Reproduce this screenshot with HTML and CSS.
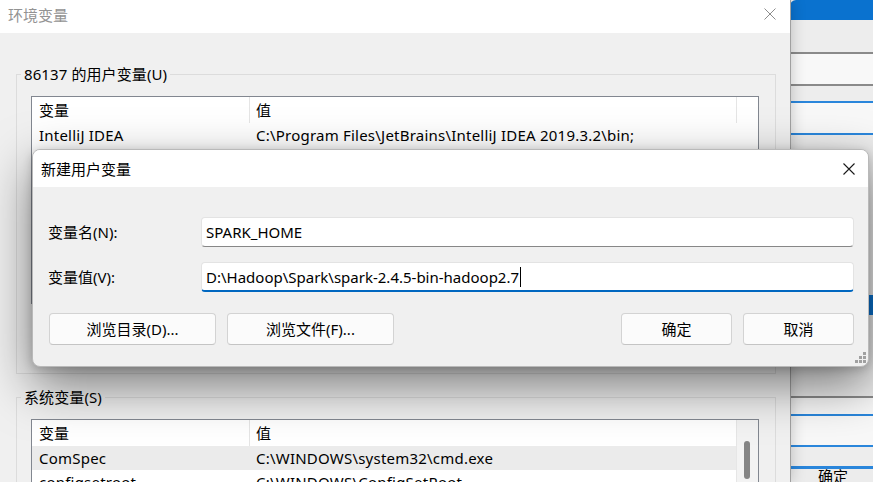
FILE: index.html
```html
<!DOCTYPE html>
<html lang="zh-CN">
<head>
<meta charset="utf-8">
<title>环境变量</title>
<link rel="stylesheet" href="styles.css">
</head>
<body>
<div class="desktop">

  <div class="sys-window">
    <div class="band band-blue"></div>
    <div class="band band-gray h32"></div>
    <div class="line-dark"></div>
    <div class="band band-light h31"></div>
    <div class="line-dark"></div>
    <div class="band band-gray h15"></div>
    <div class="line-blue"></div>
    <div class="band band-light h31"></div>
    <div class="line-blue"></div>
    <div class="band band-gray h160"></div>
    <div class="band band-blueblock"></div>
    <div class="band band-gray h80"></div>
    <div class="line-dark"></div>
    <div class="band band-light h16"></div>
    <div class="line-blue"></div>
    <div class="band band-light h30"></div>
    <div class="line-blue"></div>
    <div class="band band-gray h20"></div>
    <div class="line-blue thick"></div>
    <div class="sys-btn">确定</div>
  </div>

  <div class="main-window">
    <div class="titlebar">
      <span class="title inactive">环境变量</span>
      <svg class="close" width="12" height="12" viewBox="0 0 12 12"><path d="M0.5 0.5L11.5 11.5M11.5 0.5L0.5 11.5" stroke="#8c8c8c" stroke-width="1"/></svg>
    </div>
    <div class="main-body">
      <fieldset class="group group-user">
        <legend>86137 的用户变量(U)</legend>
        <div class="list list-user">
          <div class="list-main">
            <div class="list-head">
              <div class="hcell c1">变量</div>
              <div class="hcell c2">值</div>
              <div class="hcell c3"></div>
            </div>
            <div class="list-row">
              <div class="cell c1">IntelliJ IDEA</div>
              <div class="cell c2">C:\Program Files\JetBrains\IntelliJ IDEA 2019.3.2\bin;</div>
            </div>
          </div>
        </div>
      </fieldset>

      <fieldset class="group group-sys">
        <legend>系统变量(S)</legend>
        <div class="list list-sys">
          <div class="list-main">
            <div class="list-head">
              <div class="hcell c1">变量</div>
              <div class="hcell c2">值</div>
            </div>
            <div class="list-row selected">
              <div class="cell c1">ComSpec</div>
              <div class="cell c2">C:\WINDOWS\system32\cmd.exe</div>
            </div>
            <div class="list-row">
              <div class="cell c1">configsetroot</div>
              <div class="cell c2">C:\WINDOWS\ConfigSetRoot</div>
            </div>
          </div>
          <div class="scrollbar"><div class="thumb"></div></div>
        </div>
      </fieldset>
    </div>
  </div>

  <div class="dialog">
    <div class="dlg-titlebar">
      <span class="title">新建用户变量</span>
      <svg class="close" width="12" height="12" viewBox="0 0 12 12"><path d="M0.5 0.5L11.5 11.5M11.5 0.5L0.5 11.5" stroke="#1a1a1a" stroke-width="1.1"/></svg>
    </div>
    <div class="dlg-body">
      <div class="form-row">
        <label class="form-label">变量名(N):</label>
        <div class="input"><span>SPARK_HOME</span></div>
      </div>
      <div class="form-row">
        <label class="form-label">变量值(V):</label>
        <div class="input focused"><span>D:\Hadoop\Spark\spark-2.4.5-bin-hadoop2.7</span><span class="caret"></span></div>
      </div>
      <div class="dlg-buttons">
        <div class="btn-group">
          <button class="btn w167">浏览目录(D)...</button>
          <button class="btn w167">浏览文件(F)...</button>
        </div>
        <div class="btn-group">
          <button class="btn w111">确定</button>
          <button class="btn w111">取消</button>
        </div>
      </div>
    </div>
    <svg class="grip" width="11" height="11" viewBox="0 0 11 11">
      <rect x="8" y="0" width="3" height="3" fill="#a0a0a0"/>
      <rect x="4" y="4" width="3" height="3" fill="#a0a0a0"/>
      <rect x="8" y="4" width="3" height="3" fill="#a0a0a0"/>
      <rect x="0" y="8" width="3" height="3" fill="#a0a0a0"/>
      <rect x="4" y="8" width="3" height="3" fill="#a0a0a0"/>
      <rect x="8" y="8" width="3" height="3" fill="#a0a0a0"/>
    </svg>
  </div>

</div>
</body>
</html>
```

FILE: styles.css
```css
* { box-sizing: border-box; }

html, body {
  margin: 0;
  padding: 0;
  width: 873px;
  height: 482px;
  overflow: hidden;
  background: #f0f0f0;
}

body {
  font-family: "Noto Sans", "Noto Sans CJK SC", sans-serif;
  font-size: 15px;
  line-height: 20px;
  color: #000;
}

.desktop {
  position: relative;
  width: 873px;
  height: 482px;
  overflow: hidden;
}

/* ---------- background system window ---------- */
.sys-window {
  position: absolute;
  left: 790px;
  top: 0;
  width: 200px;
  height: 482px;
  background: #ececec;
  display: flex;
  flex-direction: column;
  border-top-left-radius: 6px;
  overflow: hidden;
}
.band { width: 100%; flex: none; }
.band-blue { height: 20px; background: #0a72cf; }
.band-gray { background: #ededed; }
.band-light { background: #f8f8f8; }
.band-blueblock { height: 20px; background: #0a72cf; }
.h15 { height: 15px; }
.h16 { height: 16px; }
.h20 { height: 19px; }
.h30 { height: 29px; }
.h31 { height: 30px; }
.h32 { height: 32px; }
.h80 { height: 81px; }
.h160 { height: 160px; }
.line-dark { height: 2px; flex: none; background: #8a8a8a; }
.line-blue { height: 2px; flex: none; background: #2a86db; }
.line-blue.thick { height: 3px; }
.sys-btn {
  padding-left: 28px;
  margin-top: -3px;
  font-size: 15px;
  line-height: 20px;
}

/* ---------- main window ---------- */
.main-window {
  position: absolute;
  left: 0;
  top: 0;
  width: 791px;
  height: 482px;
  background: #f0f0f0;
  border-right: 1px solid #a0a0a0;
  box-shadow: 0 0 14px rgba(0, 0, 0, 0.22);
  display: flex;
  flex-direction: column;
}

.titlebar {
  height: 33px;
  flex: none;
  background: #fff;
  display: flex;
  align-items: center;
  justify-content: space-between;
  padding: 0 14px 0 8px;
}
.title { font-size: 15px; line-height: 20px; }
.title.inactive { color: #939393; margin-top: -3px; }
.titlebar .close { margin-top: -5px; }

.main-body {
  padding: 31px 0 0 16px;
  display: flex;
  flex-direction: column;
}

.group {
  margin: 0;
  width: 760px;
  border: 1px solid #dcdcdc;
  padding: 12px 16px 69px 14px;
  min-width: 0;
}
.group legend {
  padding: 0 3px;
  margin-left: -10px;
  line-height: 20px;
  font-size: 15px;
  letter-spacing: 0.1px;
}
.group-sys { margin-top: 13px; padding-bottom: 0; }

.list {
  width: 728px;
  border: 1px solid #828790;
  background: #fff;
  display: flex;
}
.list-user { height: 208px; }
.list-sys { height: 120px; }
.list-main { flex: 1; min-width: 0; }

.list-head {
  display: flex;
  height: 26px;
}
.hcell {
  line-height: 26px;
  height: 26px;
}
.c1 { width: 218px; padding-left: 7px; flex: none; }
.c2 { width: 487px; padding-left: 6px; flex: none; }
.c3 { flex: 1; }
.hcell.c1, .hcell.c2 { border-right: 1px solid #e5e5e5; }

.list-row {
  display: flex;
  height: 24px;
}
.cell {
  line-height: 24px;
  white-space: nowrap;
  overflow: hidden;
  letter-spacing: 0.22px;
}
.list-row.selected { background: #ebebeb; }

.scrollbar {
  width: 22px;
  flex: none;
  background: #f3f3f3;
  border-left: 1px solid #e6e6e6;
  padding: 21px 0 0 7px;
}
.thumb {
  width: 6px;
  height: 38px;
  background: #858585;
  border-radius: 3px;
}

/* ---------- buttons ---------- */
.btn {
  height: 32px;
  font-family: inherit;
  font-size: 15px;
  line-height: 20px;
  color: #000;
  background: #fbfbfb;
  border: 1px solid #d3d3d3;
  border-bottom-color: #c4c4c4;
  border-radius: 4px;
  padding: 0;
}
.w111 { width: 111px; }
.w167 { width: 167px; }

/* ---------- dialog ---------- */
.dialog {
  position: absolute;
  left: 32px;
  top: 149px;
  width: 837px;
  height: 218px;
  background: #f0f0f0;
  border: 1px solid #b9b9b9;
  border-radius: 8px;
  box-shadow: 0 18px 50px rgba(0, 0, 0, 0.5), 0 2px 10px rgba(0, 0, 0, 0.18);
  overflow: hidden;
}

.dlg-titlebar {
  height: 37px;
  background: #fff;
  display: flex;
  align-items: center;
  justify-content: space-between;
  padding: 0 13px 0 8px;
}
.dlg-titlebar .title { margin-top: 1px; }

.dlg-body {
  padding: 30px 14px 0 15px;
  display: flex;
  flex-direction: column;
}

.form-row {
  display: flex;
  align-items: center;
  height: 30px;
}
.form-row + .form-row { margin-top: 15px; }

.form-label {
  width: 153px;
  flex: none;
}

.input {
  flex: 1;
  height: 30px;
  background: #fff;
  border: 1px solid #e3e3e3;
  border-bottom-color: #878787;
  border-radius: 4px;
  padding: 0 4px;
  display: flex;
  align-items: center;
  white-space: nowrap;
}
.input.focused {
  border-bottom: 2px solid #0067c0;
  padding-top: 1px;
}
.caret {
  display: inline-block;
  width: 1px;
  height: 20px;
  background: #000;
  margin-left: 1px;
}

.dlg-buttons {
  display: flex;
  justify-content: space-between;
  margin-top: 21px;
  padding-left: 1px;
}
.btn-group {
  display: flex;
  gap: 11px;
}

.grip {
  position: absolute;
  right: 2px;
  bottom: 3px;
}
```
